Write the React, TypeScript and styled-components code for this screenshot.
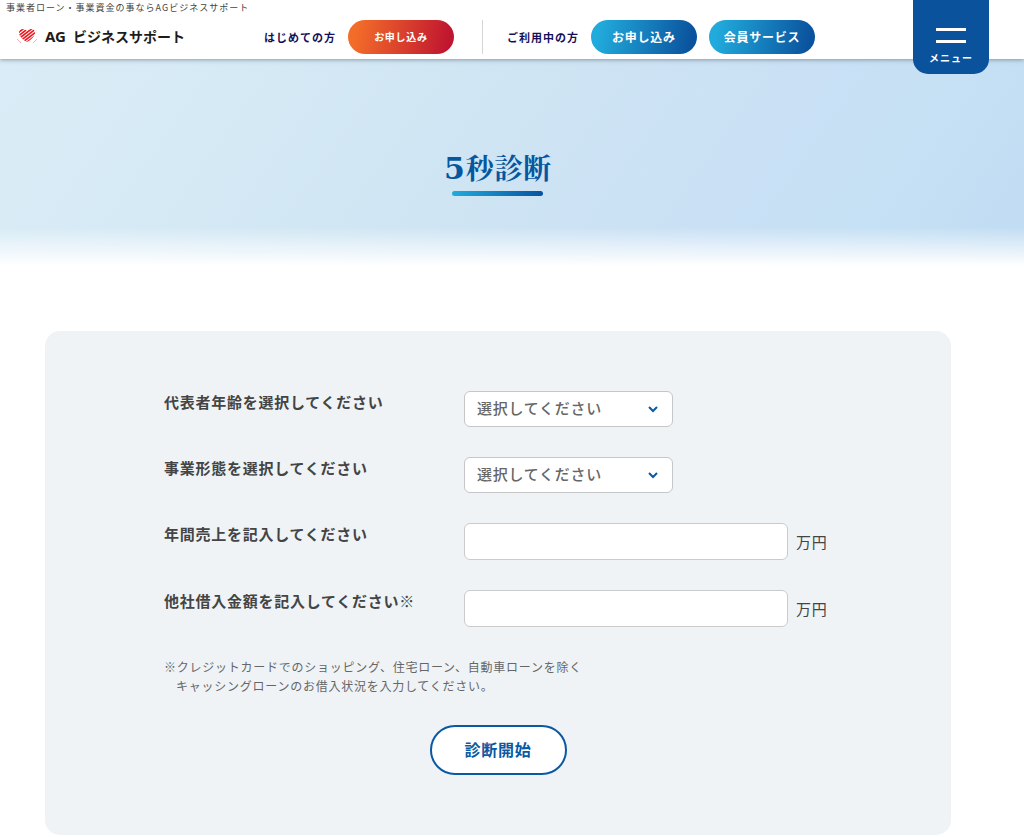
import React from "react";
import styled, { createGlobalStyle } from "styled-components";

const GlobalStyle = createGlobalStyle`
  *, *::before, *::after { box-sizing: border-box; }
  body {
    margin: 0;
    background: #fff;
    color: #444;
    font-family: "Noto Sans CJK JP", sans-serif;
    font-size: 15px;
    line-height: 22px;
    letter-spacing: 0.05em;
  }
  button, input, select { font: inherit; letter-spacing: inherit; }
`;

const Header = styled.header`
  position: relative;
  z-index: 2;
  display: flex;
  align-items: flex-start;
  height: 59px;
  padding: 0 35px 0 6px;
  background: #fff;
  box-shadow: 0 1px 4px rgba(60, 80, 100, 0.5);
`;

const Brand = styled.div`
  white-space: nowrap;
`;

const Tagline = styled.p`
  margin: 0;
  font-size: 9px;
  line-height: 16px;
  letter-spacing: 1px;
`;

const LogoLink = styled.a`
  display: flex;
  align-items: center;
  gap: 8px;
  margin: 10px 0 0 11px;
  color: #1c1c1c;
  font-size: 14px;
  font-weight: 700;
  line-height: 20px;
  letter-spacing: 0;
  text-decoration: none;
`;

const LogoLatin = styled.span`
  margin-right: 7px;
  font-family: "Noto Sans", sans-serif;
  font-size: 15px;
`;

const Nav = styled.nav`
  display: flex;
  align-items: center;
  margin: 20px 98px 0 auto;
  white-space: nowrap;
`;

const NavGroup = styled.div`
  display: flex;
  align-items: center;
  gap: 12px;

  & + & {
    margin-left: 28px;
    padding-left: 24px;
    border-left: 1px solid #d5d5d5;
  }
`;

const NavLabel = styled.span`
  color: #14105a;
  font-size: 11px;
  font-weight: 700;
  letter-spacing: 1px;
`;

const PillLink = styled.a<{ $tone: "red" | "blue" }>`
  display: flex;
  align-items: center;
  justify-content: center;
  width: 106px;
  height: 34px;
  border-radius: 17px;
  background: ${({ $tone }) =>
    $tone === "red"
      ? "linear-gradient(100deg, #f36d29 8%, #c01530 94%)"
      : "linear-gradient(100deg, #21abdc 8%, #0a529d 94%)"};
  color: #fff;
  font-size: ${({ $tone }) => ($tone === "red" ? "10px" : "12px")};
  font-weight: 700;
  text-decoration: none;
`;

const MenuButton = styled.button`
  display: flex;
  flex-direction: column;
  align-items: center;
  width: 76px;
  height: 74px;
  padding: 28px 0 0;
  border: 0;
  border-radius: 0 0 15px 15px;
  background: #0b529d;
  color: #fff;
  font-size: 10px;
  font-weight: 700;
  line-height: 16px;
  letter-spacing: 1px;
  cursor: pointer;
`;

const MenuBars = styled.span`
  width: 30px;
  height: 15px;
  margin-bottom: 7px;
  border: solid #fff;
  border-width: 3px 0;
`;

const Hero = styled.section`
  display: flex;
  justify-content: center;
  height: 207px;
  padding: 88px 28px 0 0;
  background:
    linear-gradient(to bottom, rgba(255, 255, 255, 0) 168px, #fff 207px),
    linear-gradient(125deg, #daecf6 0%, #d6eaf5 20%, #cfe5f3 45%, #c9e0f5 72%, #c5e0f4 86%, #c0dbf2 100%);
`;

const Title = styled.h1`
  display: flex;
  flex-direction: column;
  align-items: center;
  margin: 0;
  color: #0657a0;
  font-size: 28px;
  font-weight: 700;
  line-height: 40px;

  &::after {
    content: "";
    width: 91px;
    height: 5px;
    margin-top: 4px;
    border-radius: 3px;
    background: linear-gradient(90deg, #21abdc, #0753a0);
  }
`;

const TitleText = styled.span`
  font-family: "Noto Serif CJK JP", "Noto Serif JP", "Noto Sans CJK JP", serif;
`;

const TitleNumber = styled.span`
  font-family: "DejaVu Serif", serif;
  font-size: 30px;
  line-height: 28px;
`;

const Main = styled.main`
  padding: 65px 73px 2px 45px;
`;

const Panel = styled.form`
  display: flex;
  flex-direction: column;
  gap: 30px;
  padding: 60px 119px;
  border-radius: 15px;
  background: #eff3f6;
`;

const Row = styled.div`
  display: grid;
  grid-template-columns: 300px 1fr;
  align-items: start;
`;

const Label = styled.label`
  font-weight: 700;
`;

const Field = styled.div`
  display: flex;
  align-items: center;
  gap: 8px;
  white-space: nowrap;
`;

const SelectBox = styled.div`
  position: relative;
  width: 209px;

  svg {
    position: absolute;
    top: 14px;
    right: 15px;
    pointer-events: none;
  }
`;

const Select = styled.select`
  display: block;
  width: 100%;
  height: 36px;
  padding: 0 36px 2px 12px;
  border: 1px solid #c4c6c8;
  border-radius: 6px;
  appearance: none;
  background: #fff;
  color: #666;
  font-weight: 500;
`;

const Input = styled.input`
  flex: 0 1 324px;
  min-width: 0;
  height: 37px;
  padding: 0 12px;
  border: 1px solid #c9cbcd;
  border-radius: 6px;
  background: #fff;
`;

const Note = styled.p`
  margin: 0;
  padding-left: 12px;
  color: #666;
  font-size: 12px;
  line-height: 19px;
  text-indent: -12px;
`;

const SubmitButton = styled.button`
  align-self: center;
  width: 137px;
  height: 50px;
  padding: 0 0 2px;
  border: 2px solid #0a59a4;
  border-radius: 25px;
  background: #fff;
  color: #0a59a4;
  font-size: 16px;
  font-weight: 700;
  cursor: pointer;
`;

const HeartLogo = () => (
  <svg width="20" height="16" viewBox="0 0 20 16" aria-hidden="true">
    <defs>
      <clipPath id="heart">
        <path d="M10 14C7 12.4 2 8.6 2 5C2 2.6 3.6 1 5.8 1C7.8 1 9.2 2 10 3.2C10.8 2 12.2 1 14 1C16.300 1 18 2.600 18 5C18 8.600 13 12.400 10 14Z" />
      </clipPath>
    </defs>
    <g clipPath="url(#heart)" stroke="#ee1c22" strokeWidth="1.7">
      <path d="M-1 6.500L9 -1.500M0 9L13 -1M2 10.700L17 -1M4 12.300L20 0M6 14L21 2.500M8 15.600L22 5" />
    </g>
    <path d="M0 11L4 15M20 11L16 15" stroke="#f2b3b3" strokeWidth="1" />
  </svg>
);

const Chevron = () => (
  <svg width="10" height="8" viewBox="0 0 10 8" fill="none" aria-hidden="true">
    <path d="M1 2L5 6L9 2" stroke="#0b59a5" strokeWidth="2" />
  </svg>
);

const selects = [
  {
    id: "age",
    label: "代表者年齢を選択してください",
    options: ["20~29歳", "30~39歳", "40~49歳", "50~59歳", "60歳以上"],
  },
  { id: "type", label: "事業形態を選択してください", options: ["法人", "個人事業主"] },
];

const amounts = [
  { id: "sales", label: "年間売上を記入してください" },
  { id: "loans", label: "他社借入金額を記入してください※" },
];

export default function App() {
  return (
    <>
      <GlobalStyle />
      <Header>
        <Brand>
          <Tagline>事業者ローン・事業資金の事ならAGビジネスサポート</Tagline>
          <LogoLink href="#">
            <HeartLogo />
            <span>
              <LogoLatin>AG</LogoLatin>ビジネスサポート
            </span>
          </LogoLink>
        </Brand>
        <Nav>
          <NavGroup>
            <NavLabel>はじめての方</NavLabel>
            <PillLink $tone="red" href="#">お申し込み</PillLink>
          </NavGroup>
          <NavGroup>
            <NavLabel>ご利用中の方</NavLabel>
            <PillLink $tone="blue" href="#">お申し込み</PillLink>
            <PillLink $tone="blue" href="#">会員サービス</PillLink>
          </NavGroup>
        </Nav>
        <MenuButton type="button">
          <MenuBars />
          メニュー
        </MenuButton>
      </Header>
      <Hero>
        <Title>
          <TitleText>
            <TitleNumber>5</TitleNumber>秒診断
          </TitleText>
        </Title>
      </Hero>
      <Main>
        <Panel onSubmit={(e) => e.preventDefault()}>
          {selects.map(({ id, label, options }) => (
            <Row key={id}>
              <Label htmlFor={id}>{label}</Label>
              <SelectBox>
                <Select id={id} defaultValue="">
                  <option value="">選択してください</option>
                  {options.map((o) => (
                    <option key={o}>{o}</option>
                  ))}
                </Select>
                <Chevron />
              </SelectBox>
            </Row>
          ))}
          {amounts.map(({ id, label }) => (
            <Row key={id}>
              <Label htmlFor={id}>{label}</Label>
              <Field>
                <Input id={id} type="text" inputMode="numeric" />
                <span>万円</span>
              </Field>
            </Row>
          ))}
          <Note>
            ※クレジットカードでのショッピング、住宅ローン、自動車ローンを除く
            <br />
            キャッシングローンのお借入状況を入力してください。
          </Note>
          <SubmitButton type="submit">診断開始</SubmitButton>
        </Panel>
      </Main>
    </>
  );
}
